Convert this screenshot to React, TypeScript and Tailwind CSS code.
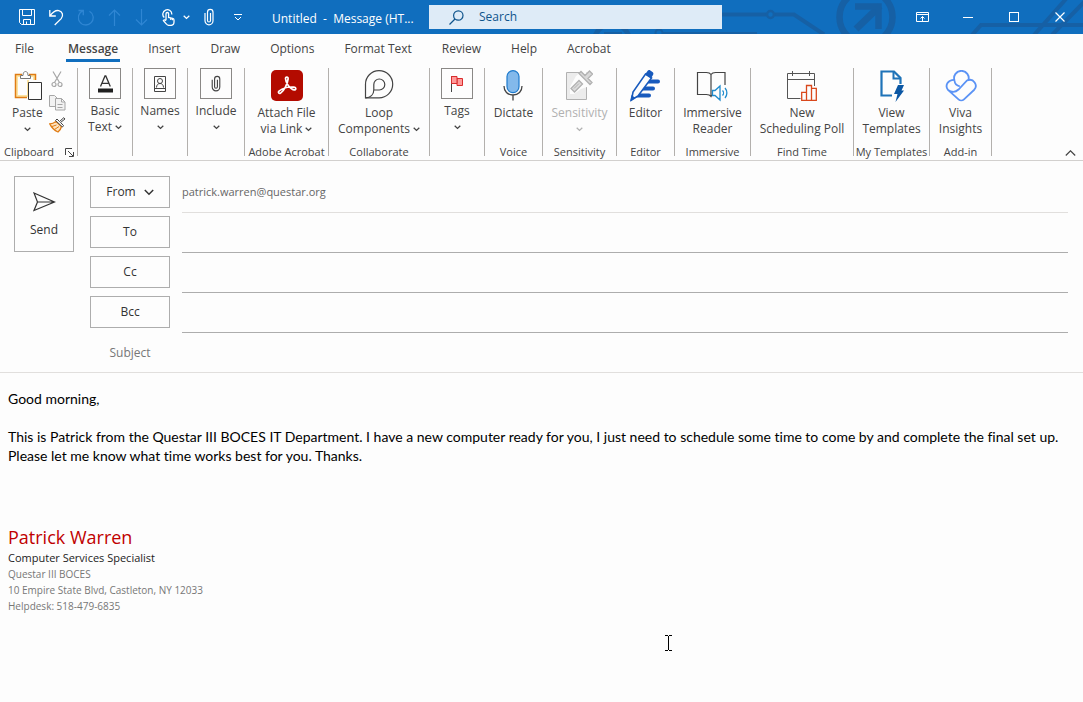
import type { ReactNode } from 'react'

function Caret({ className = '' }: { className?: string }) {
    return (
        <svg viewBox="0 0 7 5" className={`inline-block h-[5px] w-[7px] ${className}`} fill="none" stroke="currentColor" strokeWidth="1.3">
            <path d="M.7.8 3.5 3.4 6.3.8" />
        </svg>
    )
}

/* ---------- title bar icons ---------- */

function SaveIcon() {
    return (
        <svg width="16" height="16" viewBox="0 0 16 16" fill="none" stroke="currentColor">
            <path d="M.5.5h15v15H2.5l-2-2zM3.5.5v6h9v-6M4.5 15.5v-5h7v5M7.5 15v-2.5" />
        </svg>
    )
}

function UndoIcon() {
    return (
        <svg width="15" height="17" viewBox="0 0 15 17" fill="none" stroke="currentColor" strokeWidth="1.3">
            <path d="M.8 1v6h6M1 6.8C3.800 3 6.800 1 9.800 1.600c3.700.7 5 5 2.400 8L5.700 16" />
        </svg>
    )
}

function RedoIcon() {
    return (
        <svg width="16" height="17" viewBox="0 0 16 17" fill="none" stroke="currentColor" strokeWidth="1.3">
            <path d="M.5 1.500h4.800v4.800M5.100 1.700A7.400 7.400 0 1 0 11.500 2.200" />
        </svg>
    )
}

function ArrowIcon({ down = false }: { down?: boolean }) {
    return (
        <svg width="13" height="17" viewBox="0 0 13 17" fill="none" stroke="currentColor" strokeWidth="1.2">
            {down ? <path d="M6.500 0v16M1 10.500l5.500 5.500 5.500-5.500" /> : <path d="M6.500 17V1M1 6.500 6.500 1 12 6.500" />}
        </svg>
    )
}

function TouchIcon() {
    return (
        <svg width="13" height="17" viewBox="0 0 13 17" fill="none" stroke="currentColor" strokeWidth="1.3">
            <path d="M2.300 8.600A4.500 4.500 0 1 1 9.800 5.500" />
            <path d="M4 11V4.800a1.300 1.300 0 0 1 2.600 0V8.500l4 .8c1 .2 1.400.8 1.400 1.700v2c0 2-1.400 3.400-3.200 3.400H7c-1.300 0-2.200-.8-3-1.800L1.400 11.600c.6-1 1.700-.9 2.600.2" />
            <path d="M8.800 9v2M10.500 9.400v1.800" />
        </svg>
    )
}

function ClipIcon({ height = 18 }: { height?: number }) {
    return (
        <svg width="10" height={height} viewBox="0 0 10 18" fill="none" stroke="currentColor" strokeWidth="1.2">
            <path d="M6.500 5v7.500a1.500 1.500 0 0 1-3 0V4.200a2.700 2.700 0 0 1 5.500 0v8.600a4 4 0 0 1-8 0V5" />
        </svg>
    )
}

function TitleArt() {
    return (
        <svg className="absolute right-0 top-0" width="490" height="34" viewBox="593 0 490 34" fill="none" stroke="#1660a5" strokeWidth="4">
            <path d="M722 14.500h44M775 14.500h19l30 20" />
            <circle cx="770.500" cy="14.500" r="3.500" strokeWidth="2.500" />
            <path d="M595 36a18 18 0 0 1 34 0" strokeWidth="5" />
            <path d="M604 33.500h18M663 33.500h94" strokeWidth="3" />
            <circle cx="659" cy="33" r="3.500" strokeWidth="2" />
            <circle cx="866" cy="17" r="26.500" strokeWidth="6.500" />
            <path d="M856 29l24-23" strokeWidth="7" />
            <path d="M855 6.500h23.500V29" strokeWidth="6.500" />
            <path d="M972 35l9-10h102M1034 35l32-36M1052 35l35-36" />
        </svg>
    )
}

/* ---------- ribbon icons ---------- */

function PasteIcon() {
    return (
        <svg width="28" height="32" viewBox="0 0 28 32" fill="none">
            <path d="M2 5h19v5h-6v17H2z" fill="#fde3a0" />
            <path d="M4 7h15v3h-6v15H4z" fill="#fdfdfd" />
            <path d="M8 4.500H1.500v23H13M15 4.500h6.500V10" stroke="#e07c14" strokeWidth="1.5" />
            <path d="M6.500 8.500v-3h2.500C9 3 10 1.500 11.500 1.500S14 3 14 5.500h2.500v3z" fill="#fdfdfd" stroke="#777" />
            <path d="M14.500 12.500h13v17h-13z" fill="#fdfdfd" stroke="#333" />
        </svg>
    )
}

function CutIcon() {
    return (
        <svg width="12" height="17" viewBox="0 0 12 17" fill="none" stroke="#a6a6a6" strokeWidth="1.2">
            <path d="M2 .5l6.500 11M10 .5l-6.500 11" />
            <circle cx="3" cy="13.500" r="2" />
            <circle cx="9" cy="13.500" r="2" />
        </svg>
    )
}

function CopyIcon() {
    return (
        <svg width="17" height="17" viewBox="0 0 17 17" fill="#f2f2f2" stroke="#a6a6a6">
            <path d="M.5 1.500h5l3 3v8h-8z" />
            <path d="M6.500 4.500h6l3.500 3.500v8H6.500zM12.500 4.500V8H16M8.500 10.500h5M8.500 13.500h5" />
        </svg>
    )
}

function BrushIcon() {
    return (
        <svg width="17" height="16" viewBox="0 0 17 16" fill="none">
            <path d="M7 4.500C5 6 3 6.800.8 6.900 2.500 10.500 5.500 13.500 9 15c2-1.500 3-3.500 3.500-5.500z" fill="#fde3c0" stroke="#e07c14" strokeWidth="1.3" />
            <path d="M3 9.500l4.500-1.500M5.500 12.500 10 9.500" stroke="#e07c14" />
            <path d="M6.500 3.500l7 6.500 1-1.500-3-3L16 2l-1.200-1.300L10.500 4.500 8 2z" fill="#fdfdfd" stroke="#444" />
        </svg>
    )
}

function FontIcon() {
    return (
        <svg width="17" height="18" viewBox="0 0 17 18" fill="none" stroke="#333" strokeWidth="1.3">
            <path d="M3.500 11.500 8 1h.8l4.500 10.500M5 8.300h7" />
            <path d="M1 15.500h15" stroke="#1f1f1f" strokeWidth="4" />
        </svg>
    )
}

function NamesIcon() {
    return (
        <svg width="12" height="16" viewBox="0 0 12 16" fill="none" stroke="#444">
            <path d="M.5.500h11v15H.5zM.5 12.500h11" />
            <circle cx="6" cy="5" r="2.500" />
            <path d="M2.500 11.500c0-2.500 1.500-4 3.500-4s3.500 1.500 3.500 4" />
        </svg>
    )
}

function FlagIcon() {
    return (
        <svg width="12" height="18" viewBox="0 0 12 18" fill="none">
            <path d="M.5 1v16" stroke="#444" />
            <path d="M6 3.500h5.500v7H6z" fill="#ff9a9a" stroke="#d92c2c" />
            <path d="M.5 1.500H6v7H.5z" fill="#ff9a9a" stroke="#d92c2c" />
        </svg>
    )
}

function AcrobatIcon() {
    return (
        <svg width="32" height="31" viewBox="0 0 32 31" fill="none" stroke="#fff" strokeWidth="1.7">
            <rect width="32" height="31" rx="5" fill="#b30b00" stroke="none" />
            <path d="M14.500 8.500c0-2 2.800-2 2.600.4-.4 4.600-4 11.800-7.500 14.200-1.500 1-3-.6-1.600-1.900 3.500-3 10-4.600 15-4 2.500.3 2.300 2.800.2 2.700-3.200-.2-8.700-6.400-8.700-11.400z" />
        </svg>
    )
}

function LoopIcon() {
    return (
        <svg width="30" height="29" viewBox="0 0 30 29" fill="none" stroke="#444" strokeWidth="1.2">
            <path d="M1.500 27.800V14.500A13.600 13.600 0 1 1 15 27.800z" />
            <path d="M1.500 27.800c5 0 8.300-3 8.300-8V14.500a5.500 5.500 0 1 1 5.500 5.500H9.800" />
        </svg>
    )
}

function MicIcon() {
    return (
        <svg width="20" height="31" viewBox="0 0 20 31" fill="none">
            <rect x="4" y=".6" width="12" height="22" rx="6" fill="#83b9eb" stroke="#1e7bcd" strokeWidth="1.2" />
            <path d="M1 16c0 5.500 3.500 9 9 9s9-3.500 9-9M10 25v5.500" stroke="#444" strokeWidth="1.3" />
        </svg>
    )
}

function SensitivityIcon() {
    return (
        <svg width="28" height="31" viewBox="0 0 28 31" fill="none" stroke="#b1b1b1">
            <path d="M1.500 2.500h20v27h-20z" fill="#ececec" />
            <path d="M11 6l7-6 10 7v8l-12 4-7 5H5v-7z" fill="#fdfdfd" stroke="none" />
            <path d="M6 18.500 14 10.500l3.500 3.500L9.500 22z" fill="#dcdcdc" strokeWidth="1.3" />
            <path d="M9 18.500l5-5" />
            <path d="M14 3.500l2-2 4 4L24.500 1l3 3L23 8.500l4 4-2 2z" fill="#d8d8d8" strokeWidth="1.3" />
        </svg>
    )
}

function EditorIcon() {
    return (
        <svg width="32" height="32" viewBox="0 0 32 32" fill="none">
            <path d="M20 9.500h9a2 2 0 0 1 0 4H17zM15 16.500h9a2 2 0 0 1 0 4H12zM10 23.500h10a2 2 0 0 1 0 4H5z" fill="#185abd" />
            <path d="M16.500 4 22.500 8 9 26l-6.500 4L4 22z" fill="#fdfdfd" stroke="#185abd" strokeWidth="1.6" />
            <path d="M16 4.500 18.500 1c.7-1 1.800-1.200 2.800-.5l2.200 1.600c1 .7 1.200 1.800.5 2.800L22.200 8zM1 31.500l1.500-6.500 4 3z" fill="#185abd" />
        </svg>
    )
}

function ReaderIcon() {
    return (
        <svg width="32" height="32" viewBox="0 0 32 32" fill="none">
            <path d="M15 4.500C14 3 12.500 2.500 10.500 2.500H1.500v22h9c2 0 3.500.5 4.500 2 .5-1 1-1.500 2-1.800M15 26V4.500c1-1.500 2.500-2 4.500-2h9.500V15" stroke="#444" strokeWidth="1.2" />
            <path d="M16.500 20.500H19l5-4.500v14l-5-4.500h-2.500zM26.500 20.500c1.300 1.300 1.300 3.700 0 5M29 18c2.500 2.800 2.500 7.200 0 10" stroke="#1e8bcd" strokeWidth="1.3" />
        </svg>
    )
}

function PollIcon() {
    return (
        <svg width="32" height="32" viewBox="0 0 32 32" fill="none">
            <path d="M14.500 28.500h-13v-25h27V16M1.500 9.500h27M6.500 1v5M23.500 1v5" stroke="#555" />
            <path d="M15.700 30.300v-8h4.800v8zM20.500 30.300V15.500h5v14.800zM25.500 30.300v-12h4.800v12z" stroke="#d9481c" strokeWidth="1.3" />
        </svg>
    )
}

function TemplatesIcon() {
    return (
        <svg width="26" height="32" viewBox="0 0 26 32" fill="none">
            <path d="M14 25.500H3.500V1.500h12.500l6.500 6.500V14" stroke="#1e73b8" strokeWidth="2.2" />
            <path d="M15.500 2v6.500H22" stroke="#1e73b8" strokeWidth="2" />
            <path d="M20 15h6l-2.500 5.500H26L17.500 32l2-8H16z" fill="#0b57a4" />
        </svg>
    )
}

function VivaIcon() {
    return (
        <svg width="32" height="32" viewBox="0 0 32 32" fill="none" stroke="#5b93f5" strokeWidth="1.8">
            <path d="M9.500 10.500A7.300 7.300 0 1 1 23.300 10.500M9.500 10.500c.2 3 2 5.200 5.300 5.800" />
            <path d="M9.600 9.800C3 9.500-.5 15.500 3 20l10.500 9.300a4 4 0 0 0 5.500 0L29 20c4.500-4.500-.5-12.500-7-9.500L13.500 19.500c-2.500 2.400-6 3.500-10.500.5" />
        </svg>
    )
}

/* ---------- ribbon ---------- */

interface Group {
    name?: string
    lines: string[]
    icon: ReactNode
    width: string
    caret?: boolean
    disabled?: boolean
}

const groups: Group[] = [
    { lines: ['Basic', 'Text'], icon: <FontIcon />, width: 'w-[54px]', caret: true },
    { lines: ['Names', ''], icon: <NamesIcon />, width: 'w-[54px]', caret: true },
    { lines: ['Include', ''], icon: <ClipIcon height={17} />, width: 'w-14', caret: true },
    { name: 'Adobe Acrobat', lines: ['Attach File', 'via Link'], icon: <AcrobatIcon />, width: 'w-[83px]', caret: true },
    { name: 'Collaborate', lines: ['Loop', 'Components'], icon: <LoopIcon />, width: 'w-[100px]', caret: true },
    { lines: ['Tags', ''], icon: <FlagIcon />, width: 'w-[54px]', caret: true },
    { name: 'Voice', lines: ['Dictate'], icon: <MicIcon />, width: 'w-[57px]' },
    { name: 'Sensitivity', lines: ['Sensitivity', ''], icon: <SensitivityIcon />, width: 'w-[73px]', caret: true, disabled: true },
    { name: 'Editor', lines: ['Editor'], icon: <EditorIcon />, width: 'w-[57px]' },
    { name: 'Immersive', lines: ['Immersive', 'Reader'], icon: <ReaderIcon />, width: 'w-[75px]' },
    { name: 'Find Time', lines: ['New', 'Scheduling Poll'], icon: <PollIcon />, width: 'w-[102px]' },
    { name: 'My Templates', lines: ['View', 'Templates'], icon: <TemplatesIcon />, width: 'w-[75px]' },
    { name: 'Add-in', lines: ['Viva', 'Insights'], icon: <VivaIcon />, width: 'w-[61px]' },
]

function Divider() {
    return <div className="h-[88px] w-px shrink-0 bg-[#b3b0ad]" />
}

function RibbonGroup({ group }: { group: Group }) {
    return (
        <>
            <div className={`flex h-[92px] shrink-0 flex-col items-center ${group.width}`}>
                <button disabled={group.disabled} className={`flex flex-col items-center whitespace-nowrap ${group.disabled ? 'text-[#b1b1b1]' : ''}`}>
                    {group.name ? (
                        <span className="mb-px mt-0.5 flex h-[34px] items-start justify-center">{group.icon}</span>
                    ) : (
                        <span className="mb-1 flex h-[31px] w-8 items-center justify-center border border-[#8a8886]">{group.icon}</span>
                    )}
                    {group.lines.map((line, i) => (
                        <span key={i} className="flex h-4 items-center leading-4">
                            {line}
                            {group.caret && i === group.lines.length - 1 && <Caret className={line ? 'ml-[3px]' : ''} />}
                        </span>
                    ))}
                </button>
                {group.name && <span className="mt-auto whitespace-nowrap text-[11px] leading-4">{group.name}</span>}
            </div>
            <Divider />
        </>
    )
}

const tabs = ['File', 'Message', 'Insert', 'Draw', 'Options', 'Format Text', 'Review', 'Help', 'Acrobat']

const fieldRow = 'flex h-10 gap-3'
const fieldButton = 'mt-[3px] flex h-8 w-20 shrink-0 items-center justify-center border border-[#adadad] text-[#333]'
const fieldLine = 'min-w-0 flex-1 border-b bg-transparent outline-none'

export default function App() {
    return (
        <div className="relative flex min-h-screen flex-col bg-[#fdfdfd] font-['Open_Sans','Noto_Sans',sans-serif] text-[12px] text-[#444]">
            <header className="relative grid h-[34px] grid-cols-[429fr_293fr_361fr] items-center overflow-hidden bg-[#106ebe] text-white">
                <TitleArt />
                <div className="relative flex items-center whitespace-nowrap">
                    <div className="ml-[19px] flex items-center gap-[14px]">
                        <button aria-label="Save"><SaveIcon /></button>
                        <button aria-label="Undo"><UndoIcon /></button>
                        <button aria-label="Redo" className="text-[#2f86d3]"><RedoIcon /></button>
                        <button aria-label="Previous" className="text-[#2f86d3]"><ArrowIcon /></button>
                        <button aria-label="Next" className="text-[#2f86d3]"><ArrowIcon down /></button>
                        <button aria-label="Touch mode" className="flex items-center gap-2"><TouchIcon /><Caret /></button>
                        <button aria-label="Attach"><ClipIcon /></button>
                        <button aria-label="Customize toolbar" className="ml-1.5">
                            <svg width="8" height="7" viewBox="0 0 8 7" fill="none" stroke="currentColor">
                                <path d="M0 .500h8M1 3l3 3 3-3" />
                            </svg>
                        </button>
                    </div>
                    <h1 className="ml-[30px] mt-1 whitespace-pre">Untitled  -  Message (HT...</h1>
                </div>
                <label className="relative flex h-6 items-center gap-[15px] bg-[#deebf7] pl-5 text-[#0f548c]">
                    <svg width="15" height="15" viewBox="0 0 15 15" fill="none" stroke="currentColor" strokeWidth="1.2">
                        <circle cx="9.300" cy="5.500" r="4.700" />
                        <path d="M6 9 .5 14.500" />
                    </svg>
                    <input type="text" aria-label="Search" placeholder="Search" className="min-w-0 flex-1 bg-transparent outline-none placeholder:text-[#0f548c]" />
                </label>
                <div className="relative flex justify-end">
                    <button aria-label="Ribbon display options" className="flex h-8 w-[46px] items-center justify-center">
                        <svg width="13" height="10" viewBox="0 0 13 10" fill="none" stroke="currentColor">
                            <path d="M.5.500h12v9H.500zM.5 2.500h12M6.500 9V4.500M4.500 6.500l2-2 2 2" />
                        </svg>
                    </button>
                    <button aria-label="Minimize" className="flex h-8 w-[46px] items-center justify-center">
                        <span className="h-px w-2.5 bg-white" />
                    </button>
                    <button aria-label="Maximize" className="flex h-8 w-[46px] items-center justify-center">
                        <span className="size-2.5 border border-white" />
                    </button>
                    <button aria-label="Close" className="flex h-8 w-[46px] items-center justify-center">
                        <svg width="10" height="10" viewBox="0 0 10 10" stroke="currentColor" strokeWidth="1.2">
                            <path d="M.5.500l9 9M9.500.500l-9 9" />
                        </svg>
                    </button>
                </div>
            </header>

            <nav className="flex h-7 gap-[26px] pl-[13px]">
                {tabs.map((tab) => (
                    <a
                        key={tab}
                        href="#"
                        className={`whitespace-nowrap border-b-3 px-0.5 pt-1 leading-[21px] ${tab === 'Message' ? 'border-[#106ebe] font-semibold' : 'border-transparent'} ${tab === 'File' ? 'mr-1' : ''}`}
                    >
                        {tab}
                    </a>
                ))}
            </nav>

            <section className="flex h-[99px] border-b border-[#d2d0ce] pt-1.5">
                <div className="flex h-[92px] w-[77px] shrink-0 flex-col">
                    <div className="flex">
                        <button className="ml-3 flex flex-col items-center">
                            <span className="mb-px mt-0.5 flex h-[34px] pl-px"><PasteIcon /></span>
                            <span className="leading-4">Paste</span>
                            <span className="flex h-4 items-center"><Caret /></span>
                        </button>
                        <div className="ml-1.5 flex flex-col items-center gap-1.5 pt-[3px]">
                            <button aria-label="Cut"><CutIcon /></button>
                            <button aria-label="Copy"><CopyIcon /></button>
                            <button aria-label="Format Painter"><BrushIcon /></button>
                        </div>
                    </div>
                    <div className="mt-auto flex items-center justify-between pl-1 pr-[3px] text-[11px] leading-4">
                        Clipboard
                        <button aria-label="Clipboard options">
                            <svg width="9" height="9" viewBox="0 0 9 9" fill="none" stroke="currentColor">
                                <path d="M.5 7V.500H7M3 3l5 5M8.500 4v4.500H4" />
                            </svg>
                        </button>
                    </div>
                </div>
                <Divider />
                {groups.map((group) => (
                    <RibbonGroup key={group.lines.join(' ')} group={group} />
                ))}
                <button aria-label="Collapse ribbon" className="mb-1 ml-auto mr-[7px] self-end">
                    <svg width="11" height="6" viewBox="0 0 11 6" fill="none" stroke="currentColor" strokeWidth="1.2">
                        <path d="M.8 5.500 5.500.800l4.700 4.700" />
                    </svg>
                </button>
            </section>

            <section className="flex gap-4 border-b border-[#e1dfdd] pl-[14px] pr-[15px] pt-3">
                <button className="mt-[3px] flex h-[76px] w-[60px] shrink-0 flex-col items-center border border-[#adadad] pt-[15px] text-[#333]">
                    <svg width="23" height="20" viewBox="0 0 23 20" fill="none" stroke="currentColor" strokeWidth="1.2">
                        <path d="M1 1l20.500 9L1 18.500 4.500 10zM4.500 10h17" />
                    </svg>
                    <span className="mt-2.5 leading-4">Send</span>
                </button>
                <div className="min-w-0 flex-1">
                    <div className={fieldRow}>
                        <button className={`${fieldButton} gap-2`}>
                            From
                            <svg width="10" height="7" viewBox="0 0 10 7" fill="none" stroke="currentColor" strokeWidth="1.5">
                                <path d="M.8 1 5 5.200 9.200 1" />
                            </svg>
                        </button>
                        <input aria-label="From" defaultValue="patrick.warren@questar.org" className={`${fieldLine} border-[#e1dfdd] text-[11px] text-[#666]`} />
                    </div>
                    {['To', 'Cc', 'Bcc'].map((name) => (
                        <div key={name} className={fieldRow}>
                            <button className={fieldButton}>{name}</button>
                            <input aria-label={name} className={`${fieldLine} border-[#adadad]`} />
                        </div>
                    ))}
                    <div className="flex h-[39px] gap-3">
                        <label htmlFor="subject" className="w-20 self-center text-center text-[#777]">Subject</label>
                        <input id="subject" className="min-w-0 flex-1 bg-transparent outline-none" />
                    </div>
                </div>
            </section>

            <main className="flex-1 px-2 pt-4">
                <div className="font-['Lato','Open_Sans',sans-serif] text-[14px] leading-[19px] text-black [font-variant-ligatures:none]">
                    <p>Good morning,</p>
                    <p className="mt-[19px]">
                        This is Patrick from the Questar III BOCES IT Department. I have a new computer ready for you, I just need to schedule some time to come by and complete the final set up. Please let me know what time works best for you. Thanks.
                    </p>
                </div>
                <address className="mt-[59px] text-[10px] not-italic leading-4 text-[#777]">
                    <p className="text-[18px] leading-[26px] text-[#c00000]">Patrick Warren</p>
                    <p className="text-[11px] text-[#222]">Computer Services Specialist</p>
                    <p>Questar III BOCES</p>
                    <p>10 Empire State Blvd, Castleton, NY 12033</p>
                    <p>Helpdesk: 518-479-6835</p>
                </address>
            </main>

            <svg className="pointer-events-none absolute left-[665px] top-[635px]" width="7" height="16" viewBox="0 0 7 16" fill="none" stroke="#000" shapeRendering="crispEdges">
                <path d="M0 .500h3M4 .500h3M3.500 1v14M0 15.500h3M4 15.500h3" />
            </svg>
        </div>
    )
}
